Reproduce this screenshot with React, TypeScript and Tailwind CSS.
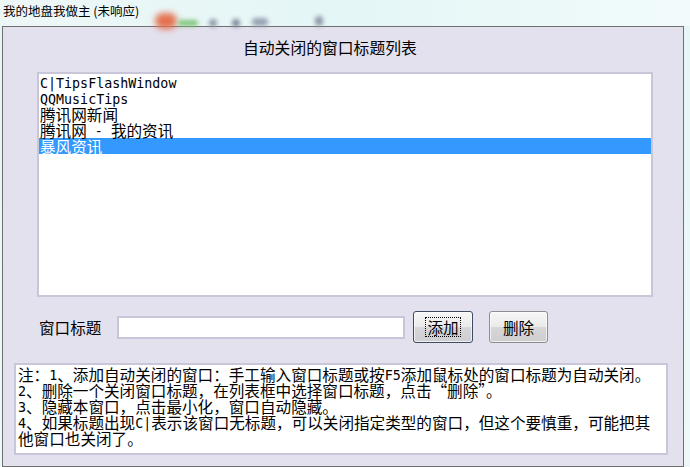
import React from "react";

const items = ["C|TipsFlashWindow", "QQMusicTips", "腾讯网新闻", "腾讯网 - 我的资讯", "暴风资讯"];

const notes = [
  "注：1、添加自动关闭的窗口：手工输入窗口标题或按F5添加鼠标处的窗口标题为自动关闭。",
  "2、删除一个关闭窗口标题，在列表框中选择窗口标题，点击“删除”。",
  "3、隐藏本窗口，点击最小化，窗口自动隐藏。",
  "4、如果标题出现C|表示该窗口无标题，可以关闭指定类型的窗口，但这个要慎重，可能把其",
  "他窗口也关闭了。",
];

// split latin runs (half width, mono) from CJK runs (full width)
const Mixed = ({ text }: { text: string }) => {
  const runs = text.match(/[\x20-\x7e]+|[^\x20-\x7e]+/g) || [];
  return (
    <>
      {runs.map((r, i) =>
        /^[\x20-\x7e]/.test(r) ? (
          <span
            key={i}
            className="inline-block align-top h-[16px] leading-[20px] font-['DejaVu_Sans_Mono',monospace] text-[13.33px] whitespace-pre"
          >
            {r}
          </span>
        ) : (
          <span
            key={i}
            className="inline-block align-top h-[16px] leading-[16px] font-['Noto_Sans_CJK_SC',sans-serif] text-[15.6px]"
          >
            {r}
          </span>
        )
      )}
    </>
  );
};

const App = () => {
  return (
    <div className="w-[690px] h-[467px] overflow-hidden bg-gradient-to-b from-[#e6f5f6] to-[#eef8f9] font-['Noto_Sans_CJK_SC',sans-serif] text-black">
      <div className="relative h-[26px] bg-gradient-to-r from-[#eef7f7] via-[#e4f6f6] to-[#f2fbfb]">
        <span className="absolute left-[155px] top-[13px] w-[22px] h-[16px] rounded-full bg-[#e4714f] blur-[3px]" />
        <span className="absolute left-[178px] top-[20px] w-[20px] h-[6px] rounded-full bg-[#7fc57a] blur-[2px]" />
        <span className="absolute left-[209px] top-[19px] w-[8px] h-[8px] rounded-full bg-[#8f98a8] blur-[2px]" />
        <span className="absolute left-[232px] top-[19px] w-[8px] h-[8px] rounded-full bg-[#7f8796] blur-[2px]" />
        <span className="absolute left-[252px] top-[18px] w-[16px] h-[8px] rounded-full bg-[#9aa2b3] blur-[2px]" />
        <span className="absolute left-[315px] top-[16px] w-[8px] h-[10px] rounded-full bg-[#8f98a8] blur-[2px]" />
        <div className="relative pl-[3px] pt-[3px] text-[12.5px] leading-[16px] font-['Noto_Sans_CJK_SC',sans-serif]">
          我的地盘我做主 (未响应)
        </div>
      </div>

      <div className="ml-[2px] w-[682px] h-[441px] border border-[#707070] bg-[#e3e1ed] flex flex-col">
        <div className="h-[45px] pl-[240px] pt-[11px] text-[15.8px] leading-[20px]">自动关闭的窗口标题列表</div>

        <div className="ml-[34px] w-[616px] h-[225px] border-2 border-[#c8c6d8] bg-white leading-[16px]">
          {items.map((it, i) => (
            <div
              key={i}
              className={
                i === 4
                  ? "h-[16px] pl-[1px] bg-[#3399ff] text-white whitespace-nowrap"
                  : "h-[16px] pl-[1px] whitespace-nowrap"
              }
            >
              <Mixed text={it} />
            </div>
          ))}
        </div>

        <div className="mt-[14px] h-[32px] flex items-center">
          <span className="ml-[36px] w-[78px] text-[15.6px] leading-[18px]">窗口标题</span>
          <div className="w-[288px] h-[23px] border-2 border-[#c8c6d8] bg-white" />
          <button className="ml-[8px] w-[60px] h-[32px] rounded-[3px] border border-[#3d4c60] bg-[linear-gradient(#f6f6f6_0%,#ebebeb_48%,#d6d6d8_52%,#cfcfd2_100%)] shadow-[inset_0_0_0_1px_#ffffffaa] flex items-center justify-center">
            <span className="border border-dotted border-black px-[1px] text-[15.6px] leading-[18px]">添加</span>
          </button>
          <button className="ml-[16px] w-[59px] h-[32px] rounded-[3px] border border-[#8c8e92] bg-[linear-gradient(#f6f6f6_0%,#ebebeb_48%,#d6d6d8_52%,#cfcfd2_100%)] shadow-[inset_0_0_0_1px_#ffffffaa] flex items-center justify-center text-[15.6px] leading-[18px]">
            删除
          </button>
        </div>

        <div className="mt-[20px] ml-[11px] w-[654px] h-[92px] border-2 border-[#c8c6d8] bg-white pl-[2px] pt-[1px] leading-[16px]">
          {notes.map((n, i) => (
            <div key={i} className="h-[16px] whitespace-nowrap">
              <Mixed text={n} />
            </div>
          ))}
        </div>
      </div>
    </div>
  );
};

export default App;
